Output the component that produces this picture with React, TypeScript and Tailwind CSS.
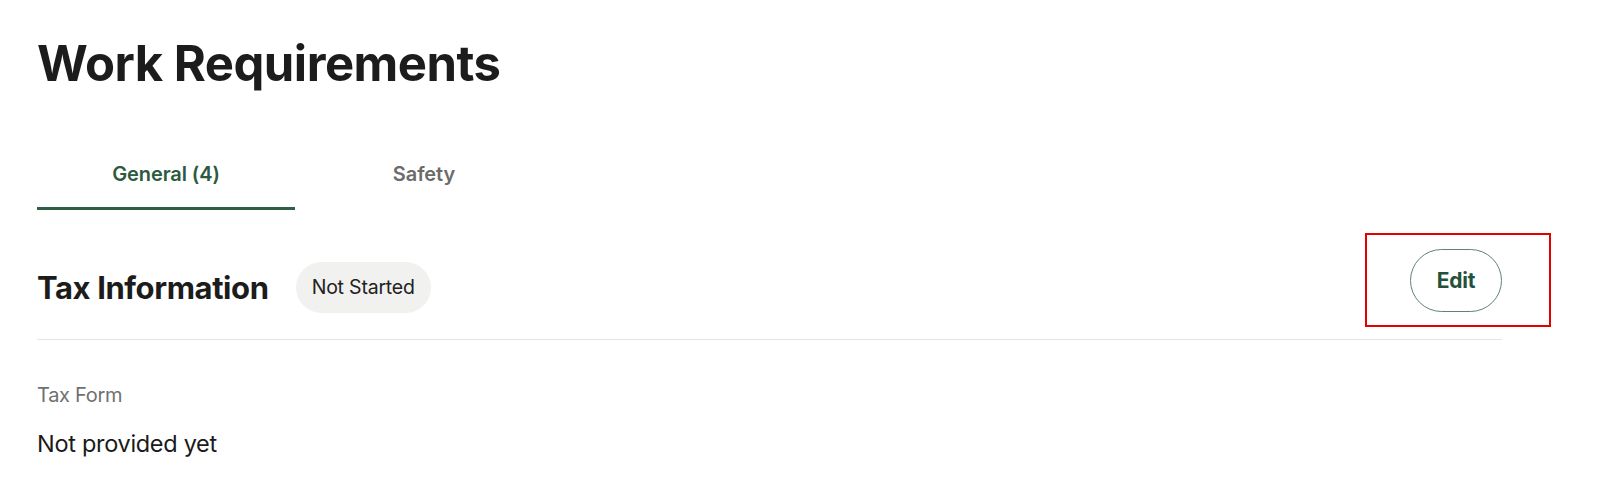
const tabs = [
  { label: 'General (4)', active: true },
  { label: 'Safety', active: false },
];

export default function App() {
  return (
    <main className="min-h-[501px] w-full bg-white pl-[37px] pr-[98px] font-['Inter',sans-serif] text-[#1a1a1a]">
      <h1 className="pt-[36px] text-[49px] font-bold leading-[56px] tracking-[-0.5px] text-[#1c1c1c]">
        Work Requirements
      </h1>

      <nav className="mt-[70px] flex">
        {tabs.map((tab) => (
          <button
            key={tab.label}
            className={
              tab.active
                ? 'w-[258px] border-b-[3px] border-[#2f5f45] pb-[21px] text-[20px] leading-[24px] font-semibold tracking-[-0.1px] text-[#2b5a40]'
                : 'w-[258px] border-b-[3px] border-transparent pb-[21px] text-[20px] leading-[24px] font-semibold tracking-[-0.1px] text-[#6b6b6b]'
            }
          >
            {tab.label}
          </button>
        ))}
      </nav>

      <section>
        <div className="flex h-[129px] items-start justify-between">
          <div className="mt-[52px] flex items-center gap-[27px]">
            <h2 className="text-[31px] font-bold leading-[36px] tracking-[-0.4px] text-[#1c1c1c]">Tax Information</h2>
            <span className="flex h-[51px] items-center rounded-full bg-[#f1f1ef] px-[16px] text-[19.5px] tracking-[-0.2px] text-[#222]">
              Not Started
            </span>
          </div>
          <div className="relative mt-[39px]">
            <button className="flex h-[63px] w-[92px] items-center justify-center rounded-full border-[1.5px] border-[#5d8570] text-[21px] font-bold tracking-[-0.2px] text-[#24513a]">
              Edit
            </button>
            <span className="pointer-events-none absolute -top-[16px] -right-[49px] -bottom-[15px] -left-[45px] border-2 border-[#e30000]" />
          </div>
        </div>
        <div className="h-px bg-[#e4e4e4]" />

        <div className="pt-[43px]">
          <p className="text-[20px] leading-[24px] tracking-[-0.3px] text-[#707070]">Tax Form</p>
          <p className="mt-[23px] text-[23.5px] leading-[28px] tracking-[-0.3px] text-[#1a1a1a]">Not provided yet</p>
        </div>
      </section>
    </main>
  );
}
